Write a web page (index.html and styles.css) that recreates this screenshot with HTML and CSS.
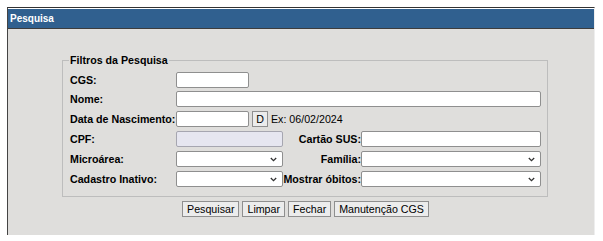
FILE: index.html
```html
<!DOCTYPE html>
<html lang="pt-BR">
<head>
<meta charset="utf-8">
<title>Pesquisa</title>
<link rel="stylesheet" href="styles.css">
</head>
<body>
<div class="panel">
  <div class="panel-title">Pesquisa</div>
  <div class="panel-body">
    <fieldset class="filters">
      <legend>Filtros da Pesquisa</legend>
      <div class="grid">
        <label class="lbl">CGS:</label>
        <div class="span3"><input type="text" class="in-short"></div>

        <label class="lbl">Nome:</label>
        <div class="span3"><input type="text" class="in-name"></div>

        <label class="lbl">Data de Nascimento:</label>
        <div class="span3 date-row"><input type="text" class="in-short"><button type="button" class="btn-d">D</button><span class="hint">Ex: 06/02/2024</span></div>

        <label class="lbl">CPF:</label>
        <div><input type="text" class="in-mid in-disabled" readonly></div>
        <label class="lbl lbl-r">Cartão SUS:</label>
        <div><input type="text" class="in-wide"></div>

        <label class="lbl">Microárea:</label>
        <div><select class="in-mid"><option></option></select></div>
        <label class="lbl lbl-r">Família:</label>
        <div><select class="in-wide"><option></option></select></div>

        <label class="lbl">Cadastro Inativo:</label>
        <div><select class="in-mid"><option></option></select></div>
        <label class="lbl lbl-r">Mostrar óbitos:</label>
        <div><select class="in-wide"><option></option></select></div>
      </div>
    </fieldset>
    <div class="actions">
      <button type="button" class="btn">Pesquisar</button>
      <button type="button" class="btn">Limpar</button>
      <button type="button" class="btn">Fechar</button>
      <button type="button" class="btn">Manutenção CGS</button>
    </div>
  </div>
</div>
</body>
</html>
```

FILE: styles.css
```css
html, body {
  margin: 0;
  padding: 0;
  background: #ffffff;
}

body {
  font-family: "Liberation Sans", Arial, sans-serif;
  font-size: 10.67px;
  color: #000;
}

.panel {
  margin: 7px 0 0 7px;
  width: 588px;
  box-sizing: border-box;
  border-top: 1px solid #333333;
  border-left: 1px solid #444444;
  border-right: 1px solid #eeeeee;
  background: #ffffff;
}

.panel-title {
  margin-top: 1px;
  height: 19px;
  line-height: 19px;
  background: #30608f;
  border-bottom: 1px solid #3c3c3c;
  color: #ffffff;
  font-weight: bold;
  font-size: 10px;
  padding-left: 2px;
}

.panel-body {
  background: #dfdedc;
  height: 206px;
  box-sizing: border-box;
  padding: 25px 46px 0 54px;
}

.filters {
  margin: 0;
  width: 486px;
  box-sizing: border-box;
  border: 1px solid #bdbdbd;
  padding: 6px 6px 9px 7px;
}

.filters legend {
  font-weight: bold;
  font-size: 10.67px;
  line-height: 12px;
  padding: 0 1px;
  margin-left: -1px;
}

.grid {
  display: grid;
  grid-template-columns: 106px 107px 78px 180px;
  grid-template-rows: 19px 20px 20px 20px 20px 16px;
  align-items: start;
}

.lbl {
  font-weight: bold;
  height: 16px;
  line-height: 16px;
  white-space: nowrap;
}

.lbl-r {
  text-align: right;
}

.span3 {
  grid-column: 2 / 5;
}

.date-row {
  display: flex;
  align-items: center;
  height: 16px;
}

input, select {
  font-family: "Liberation Sans", Arial, sans-serif;
  font-size: 10.67px;
  height: 16px;
  box-sizing: border-box;
  border: 1px solid #8f8f8f;
  border-radius: 2px;
  background: #ffffff;
  padding: 0 2px;
  margin: 0;
  display: block;
}

select {
  -webkit-appearance: none;
  appearance: none;
  padding: 0 14px 0 2px;
  background-color: #ffffff;
  background-image: url("data:image/svg+xml,%3Csvg xmlns='http://www.w3.org/2000/svg' width='7' height='5' viewBox='0 0 7 5'%3E%3Cpolyline points='0.8,1 3.5,3.6 6.2,1' fill='none' stroke='%23333333' stroke-width='1.3'/%3E%3C/svg%3E");
  background-repeat: no-repeat;
  background-position: right 5px center;
  background-size: 7px 5px;
}

.in-short { width: 73px; }
.in-name { width: 365px; }
.in-mid { width: 107px; }
.in-wide { width: 180px; }

.in-disabled {
  background: #e6e6f0;
  border-color: #a6a6b0;
}

.btn-d {
  margin-left: 3px;
  width: 16px;
  height: 16px;
  padding: 0;
}

.hint {
  margin-left: 3px;
  line-height: 16px;
}

button {
  font-family: "Liberation Sans", Arial, sans-serif;
  font-size: 10.67px;
  box-sizing: border-box;
  background: #ececec;
  border: 1px solid #8f8f8f;
  border-radius: 0;
  color: #000;
}

.actions {
  width: 486px;
  margin-top: 4px;
  display: flex;
  justify-content: center;
  gap: 3px;
  padding-left: 1px;
  box-sizing: border-box;
}

.btn {
  height: 16px;
  padding: 0 4px;
  line-height: 14px;
}
```
